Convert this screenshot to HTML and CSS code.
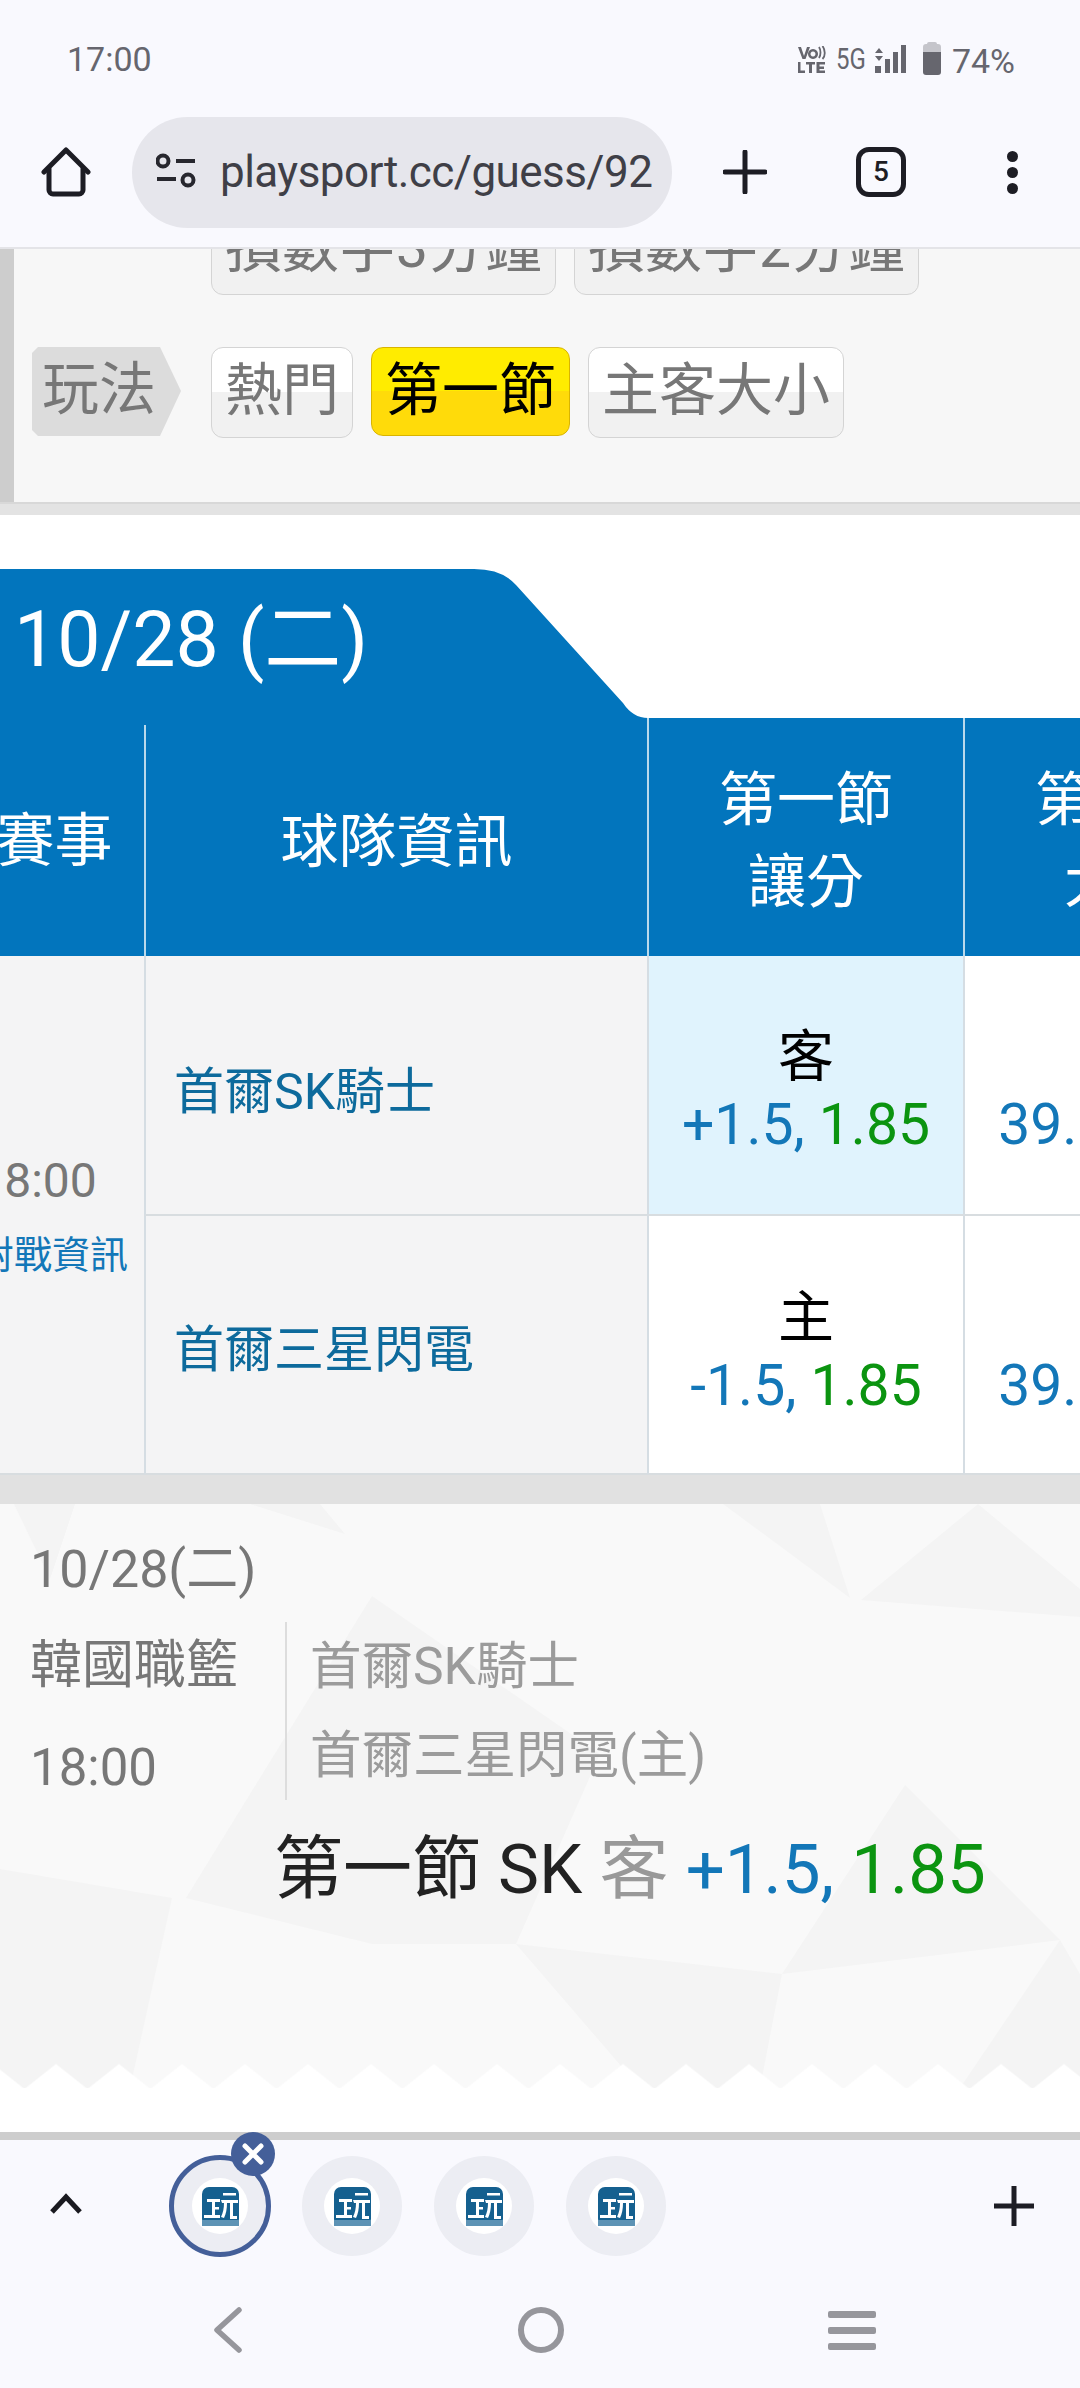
FILE: index.html
```html
<!DOCTYPE html>
<html lang="zh-Hant">
<head>
  <meta charset="UTF-8" />
  <title>playsport.cc</title>
  <link rel="stylesheet" href="styles.css">
</head>
<body>
  <svg class="defs" width="0" height="0">
    <symbol id="logo" viewBox="0 0 37 39">
      <rect width="37" height="39" rx="7" fill="#15608f"/>
      <rect y="33" width="37" height="6" fill="#5d93b5"/>
      <path d="M5 12h13v3h-5v5h4v2.500h-4v5.500h5v3H2v-3h8V15H5z" fill="#fff"/>
      <path d="M21 6h13v2.500H21zM19 13h17v3H31v13h4v3h-7V16h-3c0 6-1 11-3 15l-3-1c2-4 3-9 3-14h-2z" fill="#fff"/>
    </symbol>
  </svg>

  <div class="phone">
    <header class="topbar">
      <div class="status">
        <span class="clock">17:00</span>
        <div class="status-icons">
          <svg width="28" height="27" viewBox="0 0 28 27" fill="#66666e">
            <path d="M0 1h3l3 9 3-9h3L7.500 13h-3z"/>
            <path d="M15 3a5 5 0 1 0 .01 0zM15 5.500a2.500 2.500 0 1 1-.01 0z"/>
            <path d="M21 1c2 3 2 8 0 11M24.500 0c3 4 3 10 0 13" fill="none" stroke="#66666e" stroke-width="1.800"/>
            <path d="M0 16h2.500v8.500H7V27H0zM8 16h9v2.500h-3V27h-3v-8.500H8zM18.500 16H27v2.500h-5.500v2H26V23h-4.500v1.500H27V27h-8.500z"/>
          </svg>
          <span class="net">5G</span>
          <svg class="signal" width="32" height="28" viewBox="0 0 32 28" fill="#66666e">
            <path d="M1 8l4-5 4 5zM1 11h8l-4 5z"/>
            <rect x="1" y="21" width="6" height="7"/>
            <rect x="11" y="14" width="5" height="14"/>
            <rect x="19" y="7" width="5" height="21"/>
            <rect x="27" y="0" width="5" height="28"/>
          </svg>
          <svg class="battery" width="18" height="33" viewBox="0 0 18 33">
            <path d="M6 0h6a2 2 0 0 1 2 2h1a3 3 0 0 1 3 3v10H0V5a3 3 0 0 1 3-3h1a2 2 0 0 1 2-2z" fill="#c5c5cb"/>
            <path d="M0 10h18v20a3 3 0 0 1-3 3H3a3 3 0 0 1-3-3z" fill="#66666e"/>
          </svg>
          <span class="pct">74%</span>
        </div>
      </div>
      <div class="toolbar">
        <svg class="home-icon" width="50" height="50" viewBox="0 0 50 50" fill="none" stroke="#1d1d24" stroke-width="5" stroke-linecap="round" stroke-linejoin="round">
          <path d="M3 25L25 3l22 22"/>
          <path d="M8 22v21a4 4 0 0 0 4 4h26a4 4 0 0 0 4-4V22"/>
        </svg>
        <div class="urlbar">
          <svg width="40" height="38" viewBox="0 0 40 38" fill="none" stroke="#27272e" stroke-width="4">
            <circle cx="7" cy="8" r="5.500"/>
            <path d="M20 8h19M1 26h19"/>
            <circle cx="32" cy="27" r="5.500"/>
          </svg>
          <span class="url">playsport.cc/guess/92</span>
        </div>
        <svg class="plus-icon" width="44" height="44" viewBox="0 0 44 44" stroke="#1d1d24" stroke-width="5" stroke-linecap="round">
          <path d="M22 2v40M2 22h40"/>
        </svg>
        <div class="tab-count">5</div>
        <div class="dots"><i></i><i></i><i></i></div>
      </div>
    </header>

    <main class="content">
      <section class="filter">
        <div class="filter-row">
          <div class="label-space"></div>
          <a class="btn">損數字3分鐘</a>
          <a class="btn">損數字2分鐘</a>
        </div>
        <div class="filter-row">
          <div class="play-label">玩法</div>
          <a class="btn">熱門</a>
          <a class="btn on">第一節</a>
          <a class="btn">主客大小</a>
        </div>
      </section>
      <div class="filter-edge"></div>

      <div class="day-tab">10/28 (二)</div>
      <div class="odds-table">
        <div class="th th-first">賽事</div>
        <div class="th th-team">球隊資訊</div>
        <div class="th">第一節<br>讓分</div>
        <div class="th">第一節<br>大小</div>

        <div class="td td-game">
          <span class="game-time">18:00</span>
          <a class="game-link">對戰資訊</a>
        </div>
        <div class="td td-team">首爾SK騎士</div>
        <div class="td td-odds picked">
          <span class="side">客</span>
          <span class="odds"><b>+1.5,</b> <em>1.85</em></span>
        </div>
        <div class="td td-odds">
          <span class="side">大</span>
          <span class="odds"><b>39.5,</b> <em>1.85</em></span>
        </div>
        <div class="td td-team row-two">首爾三星閃電</div>
        <div class="td td-odds row-two">
          <span class="side">主</span>
          <span class="odds"><b>-1.5,</b> <em>1.85</em></span>
        </div>
        <div class="td td-odds row-two">
          <span class="side">小</span>
          <span class="odds"><b>39.5,</b> <em>1.85</em></span>
        </div>
      </div>
      <div class="gray-band"></div>

      <section class="slip">
        <svg class="slip-bg" width="1080" height="584" viewBox="0 0 1080 584" fill="#f4f4f4">
          <polygon points="14,0 50,75 75,0"/>
          <polygon points="320,0 345,30 250,0"/>
          <polygon points="723,0 850,94 820,0"/>
          <polygon points="861,96 1080,113 1080,85 978,0"/>
          <polygon points="0,365 172,394 130,584 0,584"/>
          <polygon points="372,92 186,394 372,440 516,440 600,250"/>
          <polygon points="905,281 1060,436 782,470"/>
          <polygon points="516,440 782,470 760,584 640,584"/>
          <polygon points="1060,436 1080,470 1080,584 960,584"/>
        </svg>
        <div class="slip-date">10/28(二)</div>
        <div class="slip-info">
          <div class="slip-league">
            <span>韓國職籃</span>
            <span class="slip-time">18:00</span>
          </div>
          <div class="slip-teams">
            <div>首爾SK騎士</div>
            <div>首爾三星閃電(主)</div>
          </div>
        </div>
        <div class="slip-pick">第一節 SK <span class="pick-side">客</span> <b>+1.5,</b> <em>1.85</em></div>
        <div class="zigzag"></div>
      </section>
      <div class="white-gap"></div>
    </main>

    <footer class="bottombar">
      <div class="tabs-row">
        <svg class="chevron" width="34" height="22" viewBox="0 0 34 22" fill="none" stroke="#1a1a20" stroke-width="5">
          <path d="M3 19L17 4l14 15"/>
        </svg>
        <div class="bubbles">
          <div class="bubble active">
            <div class="bubble-inner"><svg width="37" height="39"><use href="#logo"/></svg></div>
            <div class="bubble-close">
              <svg width="24" height="24" viewBox="0 0 24 24" stroke="#fff" stroke-width="5" stroke-linecap="round"><path d="M4 4l16 16M20 4L4 20"/></svg>
            </div>
          </div>
          <div class="bubble"><div class="bubble-inner"><svg width="37" height="39"><use href="#logo"/></svg></div></div>
          <div class="bubble"><div class="bubble-inner"><svg width="37" height="39"><use href="#logo"/></svg></div></div>
          <div class="bubble"><div class="bubble-inner"><svg width="37" height="39"><use href="#logo"/></svg></div></div>
        </div>
        <svg class="tab-add" width="40" height="40" viewBox="0 0 40 40" stroke="#1d1d24" stroke-width="5">
          <path d="M20 0v40M0 20h40"/>
        </svg>
      </div>
      <nav class="navbar">
        <svg width="32" height="46" viewBox="0 0 32 46" fill="none" stroke="#96969c" stroke-width="5.500" stroke-linecap="round" stroke-linejoin="round">
          <path d="M27 3L5 23l22 20"/>
        </svg>
        <div class="nav-circle"></div>
        <div class="nav-menu"><i></i><i></i><i></i></div>
      </nav>
    </footer>
  </div>
</body>
</html>
```

FILE: styles.css
```css
* {
  box-sizing: border-box;
}

body {
  margin: 0;
  background: #fff;
  font-family: Roboto, "Noto Sans CJK TC", sans-serif;
}

.defs {
  display: block;
  height: 0;
}

b, em {
  font-weight: 400;
  font-style: normal;
}

b {
  color: #1377b8;
}

em {
  color: #0b9410;
}

.phone {
  width: 1080px;
  height: 2388px;
  display: flex;
  flex-direction: column;
  overflow: hidden;
}

/* browser top */
.topbar {
  height: 249px;
  background: #f9f9fe;
  border-bottom: 2px solid #e4e4e8;
  flex: none;
  position: relative;
  z-index: 2;
}

.status {
  height: 116px;
  display: flex;
  justify-content: space-between;
  padding: 40px 65px 0 67px;
  color: #66666e;
  font-size: 34px;
}

.clock {
  line-height: 38px;
}

.status-icons {
  display: flex;
  align-items: flex-start;
  font-size: 34px;
  padding-top: 2px;
}

.status-icons > svg {
  margin-top: 4px;
}

.net {
  margin-left: 10px;
  width: 28px;
  font-size: 30px;
  line-height: 34px;
  transform: scaleX(0.8);
  transform-origin: left;
}

.status-icons > .signal {
  margin-left: 10px;
  margin-top: 3px;
}

.status-icons > .battery {
  margin-left: 17px;
  margin-top: 0;
}

.pct {
  margin-left: 11px;
  line-height: 38px;
}

.toolbar {
  height: 112px;
  display: flex;
  align-items: center;
  padding-left: 41px;
}

.urlbar {
  width: 540px;
  height: 111px;
  margin-left: 41px;
  padding-left: 24px;
  background: #e6e6ec;
  border-radius: 56px;
  display: flex;
  align-items: center;
  overflow: hidden;
}

.url {
  margin-left: 24px;
  width: 432px;
  overflow: hidden;
  white-space: nowrap;
  font-size: 44px;
  letter-spacing: -0.55px;
  color: #3f3f47;
}

.plus-icon {
  margin-left: 51px;
}

.tab-count {
  margin-left: 89px;
  width: 50px;
  height: 50px;
  border: 5px solid #1d1d24;
  border-radius: 13px;
  font-size: 28px;
  font-weight: 500;
  line-height: 39px;
  text-align: center;
  color: #1d1d24;
}

.dots {
  margin-left: 101px;
  display: flex;
  flex-direction: column;
  gap: 5px;
}

.dots i {
  width: 11px;
  height: 11px;
  border-radius: 50%;
  background: #1d1d24;
}

/* scrolled page */
.content {
  flex: 1;
  overflow: hidden;
  background: #fff;
}

.filter {
  margin-top: -45px;
  padding: 0 0 64px 18px;
  background: #f7f7f7;
  border-left: 14px solid #cdcdcd;
  display: flex;
  flex-direction: column;
  gap: 52px;
}

.filter-edge {
  height: 13px;
  background: #e3e3e3;
  border-top: 2px solid #d8d8d8;
}

.filter-row {
  display: flex;
  align-items: flex-start;
  gap: 18px;
}

.label-space {
  width: 161px;
}

.play-label {
  width: 149px;
  height: 89px;
  margin-right: 12px;
  padding-left: 10px;
  background: #dcdcdc;
  color: #777;
  font-size: 57px;
  line-height: 86px;
  clip-path: polygon(6px 0, 128px 0, 149px 44px, 128px 89px, 6px 89px, 0 83px, 0 6px);
}

.btn {
  height: 91px;
  padding: 0 13px;
  border: 1px solid #d4d4d4;
  border-radius: 12px;
  background: linear-gradient(#fff 50%, #f1f1f1 50%);
  color: #777;
  font-size: 57px;
  line-height: 86px;
  white-space: nowrap;
}

.btn.on {
  height: 89px;
  border-color: #d9b400;
  background: linear-gradient(#ffec00 50%, #ffdb0a 50%);
  color: #000;
}

.day-tab {
  margin-top: 54px;
  height: 149px;
  padding: 26px 0 0 14px;
  background: #0275bd;
  color: #fff;
  font-size: 77px;
  line-height: 90px;
  clip-path: path("M0 0H474Q502 0 516 16L623 134Q633 149 648 149H0Z");
}

.odds-table {
  margin-left: -60px;
  width: 1339px;
  display: grid;
  grid-template-columns: 204px 503px 316px 316px;
  grid-template-rows: 238px 260px 259px;
  background: linear-gradient(#0275bd 238px, transparent 238px);
}

.th {
  background: #0275bd;
  border-left: 2px solid #b9d9ec;
  color: #fff;
  font-size: 58px;
  line-height: 82px;
  text-align: center;
  padding-top: 41px;
}

.th-first {
  border-left: 0;
  padding: 82px 0 0 25px;
}

.th-team {
  margin-top: 7px;
  padding-top: 75px;
  line-height: 84px;
}

.td {
  border-left: 2px solid #d5dde3;
  border-bottom: 2px solid #d8dde0;
  background: #fff;
}

.td-game {
  grid-row: span 2;
  border-left: 0;
  background: #f4f4f5;
  display: flex;
  flex-direction: column;
  align-items: center;
  padding-top: 200px;
}

.game-time {
  color: #777;
  font-size: 48px;
  line-height: 50px;
  margin-right: 10px;
}

.game-link {
  margin: 24px 0 0 20px;
  color: #1377b8;
  font-size: 38px;
  line-height: 50px;
  white-space: nowrap;
}

.td-team {
  background: #f4f4f5;
  color: #0d6a9c;
  font-size: 50px;
  padding: 101px 0 0 28px;
  line-height: 70px;
}

.td-team.row-two {
  padding-top: 99px;
  grid-column: 2;
}

.td-odds {
  display: flex;
  flex-direction: column;
  align-items: center;
  padding-top: 68px;
}

.td-odds.row-two {
  padding-top: 69px;
}

.td-odds.picked {
  background: #e0f3fd;
}

.side {
  color: #000;
  font-size: 56px;
  line-height: 66px;
}

.odds {
  font-size: 57px;
  line-height: 70px;
  white-space: nowrap;
}

.gray-band {
  height: 29px;
  background: #e1e1e1;
}

/* my pick */
.slip {
  height: 584px;
  position: relative;
  padding: 36px 0 0 30px;
  background: #f9f9f9;
  overflow: hidden;
}

.slip-bg {
  position: absolute;
  left: 0;
  top: 0;
}

.slip-date, .slip-info, .slip-pick {
  position: relative;
}

.slip-date {
  color: #777;
  font-size: 52px;
  line-height: 60px;
}

.slip-info {
  margin-top: 22px;
  height: 178px;
  display: flex;
  font-size: 52px;
}

.slip-league {
  width: 257px;
  border-right: 2px solid #ddd;
  color: #777;
  display: flex;
  flex-direction: column;
  padding-top: 14px;
  line-height: 60px;
}

.slip-time {
  margin-top: 42px;
  font-size: 51px;
}

.slip-teams {
  padding-left: 23px;
  color: #9b9b9b;
  font-size: 51.500px;
  line-height: 89px;
}

.slip-pick {
  margin: 30px 0 0 244px;
  color: #222;
  font-size: 69px;
  line-height: 80px;
  white-space: nowrap;
}

.pick-side {
  color: #999;
}

.zigzag {
  position: absolute;
  left: -7px;
  right: 0;
  bottom: 0;
  height: 25px;
  background-size: 63px 50px;
  background-image:
    linear-gradient(to bottom right, transparent 50%, #fff 52%),
    linear-gradient(to bottom left, transparent 50%, #fff 52%);
}

.white-gap {
  height: 44px;
  background: #fff;
}

/* browser bottom */
.bottombar {
  height: 256px;
  flex: none;
  background: #f9f9fe;
  border-top: 8px solid #cdcdcd;
  margin-top: -8px;
  position: relative;
}

.tabs-row {
  height: 132px;
  display: flex;
  align-items: center;
  padding-left: 49px;
}

.chevron {
  flex: none;
  margin-top: -4px;
}

.bubbles {
  flex: none;
  margin-left: 87px;
  display: flex;
  gap: 32px;
}

.bubble {
  width: 100px;
  height: 100px;
  border-radius: 50%;
  background: #ecedf3;
  position: relative;
  display: flex;
  align-items: center;
  justify-content: center;
}

.bubble.active {
  outline: 5px solid #445f99;
  outline-offset: -4px;
}

.bubble-inner {
  width: 56px;
  height: 56px;
  border-radius: 50%;
  background: #fff;
  display: flex;
  align-items: center;
  justify-content: center;
}

.bubble-close {
  position: absolute;
  right: -5px;
  top: -24px;
  width: 44px;
  height: 44px;
  border-radius: 50%;
  background: #445f99;
  display: flex;
  align-items: center;
  justify-content: center;
}

.tab-add {
  flex: none;
  margin-left: 328px;
}

.navbar {
  height: 116px;
  display: flex;
  align-items: center;
  padding-left: 212px;
}

.nav-circle {
  margin-left: 274px;
  width: 46px;
  height: 46px;
  border: 6px solid #96969c;
  border-radius: 50%;
}

.nav-menu {
  margin-left: 264px;
  display: flex;
  flex-direction: column;
  gap: 9px;
}

.nav-menu i {
  width: 48px;
  height: 7px;
  border-radius: 2px;
  background: #96969c;
}
```
